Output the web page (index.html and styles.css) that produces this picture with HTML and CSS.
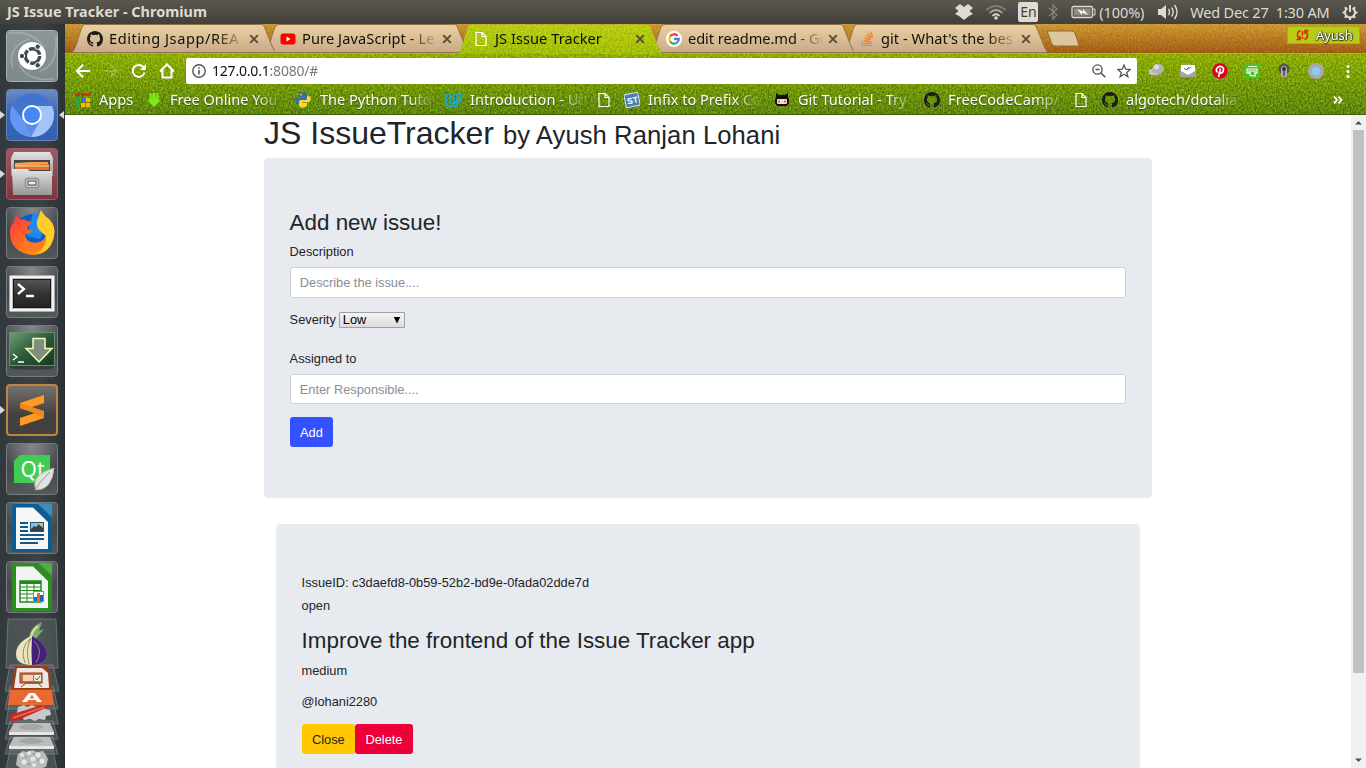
FILE: index.html
```html
<!DOCTYPE html>
<html lang="en">
<head>
<meta charset="utf-8">
<title>JS Issue Tracker</title>
<link rel="stylesheet" href="styles.css">
</head>
<body>
<svg class="defs" width="0" height="0" aria-hidden="true">
  <defs>
    <filter id="grain" x="0" y="0" width="100%" height="100%" color-interpolation-filters="sRGB">
      <feTurbulence type="fractalNoise" baseFrequency="0.6 0.45" numOctaves="2" seed="4"/>
      <feColorMatrix values="1.8 0 0 0 -0.4  1.8 0 0 0 -0.4  1.8 0 0 0 -0.4  0 0 0 0 1"/>
    </filter>
    <linearGradient id="tan" x2="0" y2="1"><stop offset="0" stop-color="#e9d3a0"/><stop offset="1" stop-color="#c9a98a"/></linearGradient>
    <linearGradient id="lime" x2="0" y2="1"><stop offset="0" stop-color="#b9cd12"/><stop offset="1" stop-color="#a3bd08"/></linearGradient>
    <linearGradient id="silver" x2="0" y2="1"><stop offset="0" stop-color="#e4e4e4"/><stop offset="1" stop-color="#979797"/></linearGradient>
    <linearGradient id="fox" x2="1" y2="1"><stop offset="0" stop-color="#ff2a50"/><stop offset=".5" stop-color="#ff6a20"/><stop offset="1" stop-color="#ffb800"/></linearGradient>
    <linearGradient id="term" x2="1" y2="1"><stop offset="0" stop-color="#6f9f78"/><stop offset=".5" stop-color="#2c5a38"/><stop offset="1" stop-color="#133a20"/></linearGradient>
    <linearGradient id="black" x2="0" y2="1"><stop offset="0" stop-color="#555"/><stop offset=".5" stop-color="#333"/><stop offset="1" stop-color="#242424"/></linearGradient>
    <symbol id="github" viewBox="0 0 16 16"><path d="M8 0C3.58 0 0 3.58 0 8c0 3.54 2.29 6.53 5.47 7.59.4.07.55-.17.55-.38v-1.49c-2.01.37-2.53-.49-2.69-.94-.09-.23-.48-.94-.82-1.13-.28-.15-.68-.52-.01-.53.63-.01 1.08.58 1.23.82.72 1.21 1.87.87 2.33.66.07-.52.28-.87.51-1.07-1.78-.2-3.64-.89-3.64-3.95 0-.87.31-1.59.82-2.15-.08-.2-.36-1.02.08-2.12 0 0 .67-.21 2.2.82a7.6 7.6 0 0 1 4 0c1.53-1.04 2.2-.82 2.2-.82.44 1.1.16 1.92.08 2.12.51.56.82 1.27.82 2.15 0 3.07-1.87 3.75-3.65 3.95.29.25.54.73.54 1.48v2.2c0 .21.15.46.55.38A8 8 0 0 0 16 8c0-4.42-3.58-8-8-8z" fill="#1c1c1c"/></symbol>
    <symbol id="file" viewBox="0 0 12 16"><path d="M1 1.5h6l4 4v9H1zM7 1.5v4h4" fill="none" stroke="#fff" stroke-width="1.2"/></symbol>
    <symbol id="x" viewBox="0 0 10 10"><path d="M1.2 1.2l7.6 7.6M8.8 1.2L1.2 8.8" stroke="#5a4c36" stroke-width="1.9"/></symbol>
    <symbol id="tabshape" viewBox="0 0 203 29"><path d="M0 28.5 C5 24 8 5 11 1.5 Q12 .5 14 .5 H189 Q191 .5 192 2 L200 22 Q202 27 204 28.5z" fill="url(#tan)" stroke="#94714d"/></symbol>
  </defs>
</svg>

<header class="panel">
  <span class="panel-title">JS Issue Tracker - Chromium</span>
  <svg class="p-drop" width="20" height="18" viewBox="0 0 20 18"><path d="M6 1l4 3 4-3 5 4-3.500 3 3.500 3-4 2-5 4-5-4-4-2 3.500-3L1 5z" fill="#dfdbd2"/></svg>
  <svg class="p-wifi" width="22" height="16" viewBox="0 0 22 16"><g fill="none" stroke-width="1.7"><path d="M1.500 6Q11-2 20.500 6" stroke="#807d75"/><path d="M4.500 9Q11 3 17.500 9" stroke="#aaa69e"/><path d="M7.500 12Q11 8.500 14.500 12" stroke="#dfdbd2"/></g><circle cx="11" cy="14" r="1.700" fill="#dfdbd2"/></svg>
  <span class="p-lang">En</span>
  <svg class="p-bt" width="10" height="16" viewBox="0 0 10 16"><path d="M1 4l8 7-4 4V1l4 4-8 7" fill="none" stroke="#85827b" stroke-width="1.400"/></svg>
  <svg class="p-bat" width="25" height="14" viewBox="0 0 25 14"><rect x="1" y="1.500" width="20.500" height="11" rx="1.500" fill="#5d5b55" stroke="#dfdbd2" stroke-width="1.300"/><rect x="3" y="3.500" width="16.500" height="7" fill="#8f8c85"/><path d="M22 4h2v6h-2" fill="none" stroke="#dfdbd2"/><path d="M6 4l6 2.500V4l5 6-6-2.500V10z" fill="#fff"/></svg>
  <span class="p-pct">(100%)</span>
  <svg class="p-vol" width="20" height="16" viewBox="0 0 20 16"><path d="M0 5h3l5-4v14l-5-4H0z" fill="#dfdbd2"/><g fill="none" stroke="#dfdbd2" stroke-width="1.400"><path d="M10.500 5Q12.500 8 10.500 11M13.500 3.500Q17 8 13.500 12.500M16.500 1Q21.500 8 16.500 15"/></g></svg>
  <span class="p-clock">Wed Dec 27&nbsp; 1:30 AM</span>
  <svg class="p-gear" width="16" height="17" viewBox="0 0 16 17"><g fill="none" stroke="#dfdbd2"><path d="M5.500 4.200a5 5 0 1 0 5 0" stroke-width="2"/><path d="M8 1v7" stroke-width="2"/><path d="M2.800 3.200l1.500 1.500M13.200 3.200l-1.500 1.500M.5 8.500h2.500M15.500 8.500H13M2.800 13.800l1.500-1.500M13.200 13.800l-1.500-1.500M8 16v-2.500" stroke-width="2"/></g></svg>
</header>

<div class="desktop">
  <aside class="dock">
    <div class="tile tile-dash"><svg viewBox="0 0 52 52"><g fill="none" stroke="#bcc5c7" stroke-opacity=".45" stroke-width="1.600"><path d="M2 3Q28 0 39 19M50 7Q52 36 34 41M49 49Q20 52 13 33M7 38Q0 18 23 9"/></g><circle cx="26" cy="26" r="15" fill="#6d7779" opacity=".4"/><circle cx="26" cy="26" r="14" fill="#fff"/><circle cx="26.500" cy="26" r="7.200" fill="none" stroke="#414b4e" stroke-width="3.400" stroke-dasharray="13.500 1.580"/><g fill="#414b4e" stroke="#fff" stroke-width="1"><circle cx="16" cy="26" r="2.700"/><circle cx="31.700" cy="16.700" r="2.700"/><circle cx="31.700" cy="35.300" r="2.700"/></g></svg></div>
    <div class="tile tile-chromium"><i class="mark-l"></i><i class="mark-r"></i><svg viewBox="0 0 52 52"><circle cx="26" cy="26" r="22" fill="#5c8be8"/><path d="M6 17A22 22 0 0 1 46 17H26L18 31z" fill="#4273cf"/><path d="M26 17h20a22 22 0 0 1-21 31l9-16z" fill="#a3c3fa"/><path d="M6 17L18 32l7 16A22 22 0 0 1 6 17" fill="#6596f3"/><circle cx="26" cy="26" r="10" fill="#fff"/><circle cx="26" cy="26" r="8" fill="#4687f4"/></svg></div>
    <div class="tile tile-files"><i class="mark-l"></i><svg viewBox="0 0 52 52"><path d="M8 4h36l3 6v18H5V10z" fill="url(#silver)"/><path d="M8 12h36v12H8z" fill="#444"/><path d="M9 15l16-1h17v8H9z" fill="#f1a24e"/><path d="M9 18l34-2v6H9z" fill="#e56d2e"/><path d="M9 18h34" stroke="#ffe1a8"/><path d="M6 21h15l3 2h22v24H7z" fill="url(#silver)"/><rect x="19.500" y="30.500" width="13" height="9" rx="2" fill="#d6d6d6" stroke="#8d8d8d" stroke-width="1.500"/><rect x="22" y="33" width="8" height="4" fill="#eee" stroke="#444"/></svg></div>
    <div class="tile"><svg viewBox="0 0 52 52"><circle cx="27" cy="25" r="18" fill="#0b60c8"/><path d="M27 6q10 0 14 8l-7 18-13-3z" fill="#2089ec"/><path d="M10 7l4 6q4-2 7 1l5 1-5 6q1 3 6 2-4 5-8 4 1 9 10 9 12-1 11-12l-4-2q-4-6-2-12l1-7q3 6 8 9 7 7 5 17-3 18-21 19Q6 46 4 28 3 20 8 15z" fill="url(#fox)"/><path d="M35 3q3 6 8 9 7 7 5 17-3 15-17 18 10-8 9-18l-7-6q-4-6-1-12z" fill="#ffcc2a"/><path d="M15 25q3 11 15 11 8-1 10-6-1 14-14 15-10-4-11-20" fill="#ff7720"/></svg></div>
    <div class="tile"><svg viewBox="0 0 52 52"><rect x="3.500" y="9.500" width="45" height="36" rx="1" fill="#f2f2f2" stroke="#aaa"/><rect x="6" y="12" width="40" height="31" fill="#bbb"/><rect x="7.500" y="13.500" width="37" height="28" fill="url(#black)" stroke="#171717"/><path d="M12 18l6 5-6 5M20 30h8" fill="none" stroke="#fff" stroke-width="2.300"/></svg></div>
    <div class="tile"><svg viewBox="0 0 52 52"><ellipse cx="26" cy="42" rx="22" ry="3" fill="#222" opacity=".5"/><rect x="3.500" y="7.500" width="45" height="33" fill="url(#term)" stroke="#6c8a70"/><path d="M27 13.500h12v10h7L33 37 20 23.500h7z" fill="#7d907f" stroke="#f7fabb" stroke-width="1.500"/><path d="M7 29l4 3-4 3M12 37h6" fill="none" stroke="#fff" stroke-width="1.300"/></svg></div>
    <div class="tile tile-sublime"><i class="mark-l"></i><svg viewBox="0 0 52 52"><path d="M14 19L38 11v8L23 24l15 5v5L14 42v-8l15-5-15-5z" fill="#ff9b20"/><path d="M14 24v-5l24 8v7l-10-5z" fill="#f1881b"/></svg></div>
    <div class="tile"><svg viewBox="0 0 52 52"><path d="M14 12h30v28H8V18z" fill="#41cd52"/><text x="14.500" y="33.500" class="qt">Qt</text><path d="M48 25Q46 47 30 47 24 32 48 25z" fill="#e2e2df" stroke="#b5b5b0"/><path d="M29 47Q34 38 44 29" stroke="#999" fill="none"/></svg></div>
    <div class="tile"><svg viewBox="0 0 52 52"><path d="M8 2h24l14 14v34H8q-2 0-2-2V4q0-2 2-2z" fill="#0b5e91"/><path d="M33 2h13v13z" fill="#3790c3"/><path d="M10 5.500h17L42 20v27H10z" fill="#f7f7f7"/><g stroke="#155988" stroke-width="1.800"><path d="M14 21h8M14 25h8M14 29h8M14 33h24M14 37h24M14 41h18"/></g><rect x="24.500" y="20.500" width="13" height="9" fill="#8ac0e4" stroke="#1d577a"/><path d="M25 29v-2l3-3 2 1 3-3 4 4v3z" fill="#32424b"/><circle cx="35" cy="22.500" r="1.500" fill="#e6c229"/></svg></div>
    <div class="tile"><svg viewBox="0 0 52 52"><path d="M8 2h24l14 14v34H8q-2 0-2-2V4q0-2 2-2z" fill="#2c8e1d"/><path d="M33 2h13v13z" fill="#4cb339"/><path d="M10 5.500h17L42 20v27H10z" fill="#f3f3f3"/><rect x="14" y="20" width="21" height="21" fill="#fff" stroke="#1e8a1a" stroke-width="1.500"/><path d="M14 21.500h21" stroke="#1e8a1a" stroke-width="3"/><path d="M14 26h21M14 29.500h21M14 33h21M14 37h21M21 20v21M28 20v21" stroke="#1e8a1a"/><rect x="27.500" y="30.500" width="10" height="10" fill="#fff" stroke="#888"/><path d="M28 36h3v4h-3z" fill="#0078bd"/><path d="M31 32h3v8h-3z" fill="#e66b25"/><path d="M34 34h3v6h-3z" fill="#1d62a6"/></svg></div>
    <svg class="stack" width="54" height="152" viewBox="0 0 54 152">
      <g fill="#7d8588" fill-opacity=".3" stroke="#8e9698" stroke-opacity=".55">
        <path d="M3 1h48l2 49H1z"/><path d="M5 47h43l6 26H0z"/><path d="M5 68h43l5 23H0z"/><path d="M4 86h45l4 20H1z"/><path d="M5 103h43l5 18H0z"/><path d="M5 119h43l5 17H0z"/><path d="M5 132h43l4 20H1z"/>
      </g>
      <path d="M25 23Q22 15 31 7l6-3-3 9 5-2-10 12z" fill="#83a96b"/><path d="M26 22Q26 13 33 8" fill="none" stroke="#d7e1b0" stroke-width="2"/>
      <path d="M26 18Q11 25 11 36q0 11 16 11 15 0 15-12-1-9-16-17" fill="#eae3bf"/><path d="M27 18q-1 15 0 29 15 0 15-12-1-9-15-17" fill="#432078"/><g fill="none" stroke="#998960"><path d="M26 20Q14 30 20 45M26 20Q20 32 24 46M29 23q10 9 2 22"/></g>
      <path d="M10 48h33l4 23H6z" fill="#963e16"/><path d="M12 50h25l6 5 1 15H9z" fill="#ece9e4"/><rect x="15" y="55" width="22" height="10" fill="#c57046" stroke="#923c12"/><rect x="18" y="57" width="10" height="6" fill="#f5d2b8"/><rect x="29" y="57" width="7" height="6" fill="#e4f0dc"/><path d="M30 60l2 2 3-4" fill="none" stroke="#229530"/><path d="M16 69l5-4h12l4 4" fill="none" stroke="#923c12"/>
      <path d="M5 72h42l2 15H3z" fill="#e86a30"/><text x="17" y="84" class="store" textLength="20" lengthAdjust="spacingAndGlyphs">A</text>
      <path d="M13 89l6-2 3 2 5-2 5 2 7-2 1 4 5 1 1 5-5 1-1 4-6-1-4 2-5-2-6 1-2-3-6-1 1-4z" fill="#c7c9c9"/><path d="M5 101q-1-3 3-5L37 87l6 2-32 14q-5 2-6-2" fill="#cb2726"/><path d="M8 100l31-11" stroke="#ef6957" stroke-width="1.500"/>
      <path d="M9 105h36l4 9H4z" fill="#bcbebe"/><path d="M4 114h45v3H4z" fill="#e6e6e6"/><ellipse cx="26" cy="109" rx="12" ry="3" fill="#a4a6a6"/>
      <path d="M9 119h36l4 9H4z" fill="#bcbebe"/><path d="M4 128h45v3H4z" fill="#e6e6e6"/><ellipse cx="26" cy="123" rx="12" ry="3" fill="#a4a6a6"/>
      <path d="M13 136l5-3 4 1 5-2 5 2 6-1 3 4 2 4-2 8-4 1H15l-4-3 1-7z" fill="#b9bdb9"/><g fill="#e6e8e6"><circle cx="17" cy="137" r="2"/><circle cx="24" cy="135" r="2"/><circle cx="33" cy="137" r="2.500"/><circle cx="28" cy="141" r="2.500"/><circle cx="19" cy="144" r="2.500"/><circle cx="37" cy="143" r="2.500"/><circle cx="29" cy="147" r="2"/></g><g fill="#8b918d"><circle cx="21" cy="139" r="1"/><circle cx="29" cy="136" r="1"/><circle cx="33" cy="142" r="1"/><circle cx="24" cy="146" r="1"/></g>
    </svg>
  </aside>

  <main class="browser">
    <div class="tabstrip">
      <svg class="grain"><rect width="100%" height="100%" filter="url(#grain)"/></svg>
      <div class="tabs">
        <div class="tab t1"><svg class="shape"><use href="#tabshape"/></svg><svg class="fav" viewBox="0 0 16 16"><use href="#github"/></svg><span class="tab-text fade">Editing Jsapp/REA</span><svg class="close"><use href="#x"/></svg></div>
        <div class="tab t2"><svg class="shape"><use href="#tabshape"/></svg><svg class="fav" viewBox="0 0 16 16"><rect x=".5" y="2.500" width="15" height="11" rx="2.500" fill="#f00"/><path d="M6.500 5.500v5l4-2.500z" fill="#fff"/></svg><span class="tab-text fade">Pure JavaScript - Le</span><svg class="close"><use href="#x"/></svg></div>
        <div class="tab t3 active"><svg class="shape" viewBox="0 0 203 30"><path id="act" d="M0 30C5 24 8 5 11 1.500Q12 .5 14 .5H189Q191 .5 192 2L200 22Q202 27 204 30z" fill="url(#lime)"/><clipPath id="actclip"><use href="#act"/></clipPath><g clip-path="url(#actclip)" class="soft"><rect width="203" height="30" filter="url(#grain)"/></g></svg><svg class="fav"><use href="#file" x="2" width="12" height="16"/></svg><span class="tab-text">JS Issue Tracker</span><svg class="close"><use href="#x"/></svg></div>
        <div class="tab t4"><svg class="shape"><use href="#tabshape"/></svg><svg class="fav" viewBox="0 0 16 16"><circle cx="8" cy="8" r="8" fill="#fff"/><g fill="none" stroke-width="2.300"><path d="M4 5.500A4.800 4.800 0 0 1 11.500 4.700" stroke="#ea4335"/><path d="M4 5.500a5 5 0 0 0 0 5" stroke="#fbbc05"/><path d="M4 10.500A4.800 4.800 0 0 0 11.200 11.500" stroke="#34a853"/><path d="M8 8h4.800q0 2-1.600 3.500" stroke="#4285f4"/></g></svg><span class="tab-text fade">edit readme.md - Go</span><svg class="close"><use href="#x"/></svg></div>
        <div class="tab t5"><svg class="shape"><use href="#tabshape"/></svg><svg class="fav" viewBox="0 0 16 16"><path d="M3 10v4.500h9V10" fill="none" stroke="#a0a0a0" stroke-width="1.300"/><g stroke="#f48024" stroke-width="1.400"><path d="M4.500 12.500h6M4.700 9.800l6 .9M5.500 7l5.500 2M7 4.300l4.800 3.500M9 2l3.500 4.800M12.200.7l1.200 5.700"/></g></svg><span class="tab-text fade">git - What's the bes</span><svg class="close"><use href="#x"/></svg></div>
      </div>
      <svg class="newtab" width="35" height="18" viewBox="0 0 35 18"><path d="M1 1h25q2 0 3 2l4 12q0 1-1 1H9q-2 0-3-2z" fill="#dcc79c" stroke="#8f6a36"/></svg>
      <div class="profile"><svg width="13" height="12" viewBox="0 0 13 12"><g fill="none" stroke="#d92608" stroke-width="1.500"><path d="M4.500 1.500Q1 3 1.500 6.500L3 10M.5 10.500h3.500V7M8.500 10.500Q12 9 11.500 5.500L10 2M12.500 1.500H9V5"/></g><path d="M6.500 2v4.500M6.500 8v2" stroke="#d92608" stroke-width="1.500"/></svg><span>Ayush</span></div>
    </div>

    <div class="chrome">
      <svg class="grain"><rect width="100%" height="100%" filter="url(#grain)"/></svg>
      <nav class="toolbar">
        <div class="nav-icons">
          <svg viewBox="0 0 16 16"><path d="M15 8H2M8 1.800L1.800 8 8 14.200" fill="none" stroke="#fff" stroke-width="2"/></svg>
          <svg viewBox="0 0 16 16" opacity=".22"><path d="M1 8h13M8 1.800L14.200 8 8 14.200" fill="none" stroke="#fff" stroke-width="2"/></svg>
          <svg viewBox="0 0 16 16"><path d="M13.500 9.500A6 6 0 1 1 12.300 4" fill="none" stroke="#fff" stroke-width="2"/><path d="M15 1v6H9z" fill="#fff"/></svg>
          <svg viewBox="0 0 16 16"><path d="M1 8.500L8 1.500l7 7M3.500 7v7.500h9V7" fill="none" stroke="#fff" stroke-width="2"/></svg>
        </div>
        <div class="omnibox">
          <svg width="14" height="14" viewBox="0 0 14 14"><circle cx="7" cy="7" r="6.200" fill="none" stroke="#555" stroke-width="1.400"/><path d="M7 6v4.500M7 3.300v1.500" stroke="#555" stroke-width="1.600"/></svg>
          <span class="url">127.0.0.1<em>:8080/#</em></span>
          <svg class="lens" width="14" height="14" viewBox="0 0 14 14"><circle cx="5.500" cy="5.500" r="4.600" fill="none" stroke="#555" stroke-width="1.400"/><path d="M3.500 5.500h4M9 9l4.300 4.300" stroke="#555" stroke-width="1.600"/></svg>
          <svg width="14" height="14" viewBox="0 0 14 14"><path d="M7 1l1.700 4.200 4.500.3-3.500 2.900 1.200 4.400L7 10.300l-3.900 2.500 1.200-4.400L.8 5.500l4.500-.3z" fill="none" stroke="#555" stroke-width="1.300"/></svg>
        </div>
        <div class="exts">
          <svg viewBox="0 0 16 16"><circle cx="10" cy="6" r="5.500" fill="#b3b3b3"/><circle cx="8.500" cy="4" r="2.500" fill="#dedede"/><path d="M7 10l3 4 3-5z" fill="#999"/><path d="M7 5Q0 6 .5 9.500T9 12l4-3q-7 2-8 0t2-3z" fill="#c4c4c4"/></svg>
          <svg viewBox="0 0 16 16"><path d="M0 5l8-5 8 5v9H0z" fill="#a4a4a4"/><path d="M1 2h14v6l-7 4-7-4z" fill="#fff"/><path d="M4 5l2 2 3-3M7 7l4-3" stroke="#777" fill="none"/></svg>
          <svg viewBox="0 0 16 16"><circle cx="8" cy="8" r="7.700" fill="#df0020"/><path d="M5.500 9.500Q3 7 5.500 4.500q4-2.500 6 1 0 5-3.500 4.500L6.500 9.500M8.500 5.500L6.500 14" fill="none" stroke="#fff" stroke-width="1.700"/></svg>
          <svg viewBox="0 0 16 16"><rect x=".5" y=".5" width="15" height="15" fill="#4fc11d"/><path d="M4 3.500h9M3 6h10v4h-2V8H5v2H3zM6 9v3l3 1h2V9" fill="none" stroke="#fff" stroke-width="1.200"/></svg>
          <svg viewBox="0 0 16 16"><circle cx="8" cy="6" r="5.500" fill="#555"/><path d="M5 6a3 3 0 0 1 6 0v8H5z" fill="#aaa"/><circle cx="8" cy="6" r="1.900" fill="#333"/><path d="M7 8h2v5H7z" fill="#666"/></svg>
          <svg viewBox="0 0 16 16"><circle cx="8" cy="8" r="8" fill="#a9aaa9"/><circle cx="8" cy="8" r="4.200" fill="#91c9f5"/></svg>
          <svg viewBox="0 0 16 16"><g fill="#fff"><circle cx="8" cy="3.500" r="1.500"/><circle cx="8" cy="8.500" r="1.500"/><circle cx="8" cy="13.500" r="1.500"/></g></svg>
        </div>
      </nav>
      <nav class="bookmarks">
        <div class="bm b-apps"><svg width="14" height="14" viewBox="0 0 14 14"><path d="M0 0h4v3H0zM5 0h4v3H5zM10 0h4v3h-4z" fill="#e52717"/><path d="M0 5h4v4H0zM0 10h4v4H0z" fill="#20a35b"/><path d="M5 5h4v4H5z" fill="#3c70e8"/><path d="M10 5h4v4h-4zM5 10h4v4H5zM10 10h4v4h-4z" fill="#fcb900"/></svg><span>Apps</span></div>
        <div class="bm b-free"><svg width="14" height="16" viewBox="0 0 14 16"><path d="M2.500 1h9v7H14l-7 7-7-7h2.500z" fill="#7fe914"/><path d="M5 1v5M9 1v5" stroke="#59bd09"/></svg><span class="fade">Free Online You</span></div>
        <div class="bm b-py"><svg width="16" height="16" viewBox="0 0 16 16"><path d="M8 .5c-3 0-4 1-4 2.500V5h4.500v.7H2.500C1 5.700.3 7 .3 9s1 3 2.200 3H4V9.500Q4 8 5.500 8H10q2 0 2-2V3Q12 .5 8 .5z" fill="#356f9f"/><path d="M8 15.500c3 0 4-1 4-2.500v-2H7.500v-.7h6c1.500 0 2.200-1.300 2.200-3.300s-1-3-2.200-3H12V6.500Q12 8 10.500 8H6q-2 0-2 2v3q0 2.500 4 2.500z" fill="#ffd43b"/><circle cx="6" cy="2.800" r=".8" fill="#fff"/></svg><span class="fade">The Python Tuto</span></div>
        <div class="bm b-ud"><svg width="17" height="16" viewBox="0 0 17 16"><path d="M5 1.500Q1 2 1 5v4q0 5.500 6 5.500 5 0 6-4M5 1.500V8q0 3.500 3.500 3.500T12 8V2.500M8.500 2.500V8q0 3 3.500 3 3.500-.5 3.500-4V1.500L12 2.500" fill="none" stroke="#12aae0" stroke-width="1.700"/></svg><span class="fade">Introduction - Ud</span></div>
        <svg class="bm-file" width="12" height="16"><use href="#file"/></svg>
        <div class="bm b-in"><svg width="16" height="16" viewBox="0 0 16 16"><g transform="rotate(-12 8 8)"><rect x="1" y="1.500" width="14" height="13" fill="#4b7eb8" stroke="#dbe3ec"/><text x="3" y="11.500" class="st">ST</text></g></svg><span class="fade">Infix to Prefix Co</span></div>
        <div class="bm b-git"><svg width="14" height="13" viewBox="0 0 14 13"><path d="M1 0l3 2h6l3-2v5l1 1v4l-2 3H2L0 10V6l1-1z" fill="#111"/><rect x="2" y="6" width="10" height="5" rx="1" fill="#ffd7cb"/><path d="M4 7.500v2M10 7.500v2" stroke="#9c4f46" stroke-width="1.400"/></svg><span class="fade">Git Tutorial - Try</span></div>
        <div class="bm b-fcc"><svg width="16" height="16"><use href="#github"/></svg><span class="fade">FreeCodeCamp/</span></div>
        <svg class="bm-file second" width="12" height="16"><use href="#file"/></svg>
        <div class="bm b-algo"><svg width="16" height="16"><use href="#github"/></svg><span class="fade">algotech/dotalia</span></div>
        <svg class="more" width="10" height="8" viewBox="0 0 10 8"><path d="M1 .7L4 4 1 7.300M5.500.7l3 3.300-3 3.300" fill="none" stroke="#fff" stroke-width="1.800"/></svg>
      </nav>
    </div>

    <div class="viewport">
      <div class="page">
        <h1 class="page-title">JS IssueTracker <small>by Ayush Ranjan Lohani</small></h1>
        <section class="card form-card">
          <h3 class="card-title">Add new issue!</h3>
          <div class="group"><label for="desc">Description</label><input id="desc" class="field" placeholder="Describe the issue...."></div>
          <div class="severity"><label>Severity</label><div class="select"><span>Low</span><svg width="8" height="8" viewBox="0 0 8 8"><path d="M.8 1h6.400L4 7.500z"/></svg></div></div>
          <div class="group"><label for="who">Assigned to</label><input id="who" class="field" placeholder="Enter Responsible...."></div>
          <button class="btn primary">Add</button>
        </section>
        <section class="card issue-card">
          <p class="issue-id">IssueID: c3daefd8-0b59-52b2-bd9e-0fada02dde7d</p>
          <p class="status">open</p>
          <h3 class="issue-title">Improve the frontend of the Issue Tracker app</h3>
          <p class="level">medium</p>
          <p class="owner">@lohani2280</p>
          <div class="actions"><button class="btn warning">Close</button><button class="btn danger">Delete</button></div>
        </section>
      </div>
      <div class="scrollbar"><svg width="15" height="15" viewBox="0 0 15 15"><path d="M4 9.500L7.500 6 11 9.500z" fill="#505050"/></svg><div class="thumb"></div><svg width="15" height="15" viewBox="0 0 15 15"><path d="M4 5.500L7.500 9 11 5.500z" fill="#505050"/></svg></div>
    </div>
  </main>
</div>
</body>
</html>
```
FILE: styles.css
```css
* { box-sizing: border-box; }
body { margin: 0; width: 1366px; height: 768px; overflow: hidden; font: 12.8px/1.5 "Liberation Sans", Arial, sans-serif; color: #212529; }
.defs { position: absolute; }
svg { flex: none; }

/* Desktop panel */
.panel { height: 24px; display: flex; align-items: center; padding: 0 8px 0 7px; background: linear-gradient(#5a584f, #403f3a); color: #dfdbd2; font: 14.5px/24px "Noto Sans", "Open Sans", sans-serif; white-space: nowrap; }
.panel-title { font-weight: 700; font-size: 14.400px; width: 949px; letter-spacing: .02px; }
.p-wifi { margin-left: 11px; }
.p-lang { width: 20px; height: 20px; margin-left: 11px; border-radius: 2px; background: #dfdbd2; color: #403f3a; font-size: 14px; line-height: 20px; text-align: center; }
.p-bt { margin-left: 10px; }
.p-bat { margin-left: 13px; }
.p-pct { margin-left: 3px; width: 47px; font-size: 14.500px; letter-spacing: -.1px; }
.p-vol { margin-left: 12px; }
.p-clock { margin-left: 12px; width: 140px; font-size: 14.500px; letter-spacing: -.18px; }
.p-gear { margin-left: 12px; }

.desktop { display: flex; height: 744px; }

/* Launcher */
.dock { width: 65px; flex: none; padding: 6px 6px 0; display: flex; flex-direction: column; gap: 7px; overflow: hidden; background: linear-gradient(90deg, #32393c, #3a4245 60%, #2b3235); }
.tile { position: relative; width: 52px; height: 52px; flex: none; border-radius: 4px; border: 1px solid #767b7d; background: radial-gradient(ellipse at 50% 0, #85898b, transparent 70%), linear-gradient(#55595b, #45494c 50%, #53585a); }
.tile svg { display: block; margin: -1px; width: 52px; height: 52px; }
.tile-dash { background: linear-gradient(#8d9799, #7e898b); border-color: #a8b0b2; }
.tile-chromium { background: linear-gradient(#6c8bc2, #3866b5 45%, #3461b2); border-color: #6484ba; }
.tile-files { background: linear-gradient(#985c67, #80333e); border-color: #a75a66; }
.tile-sublime { border: 2px solid #bf843f; background: linear-gradient(#75716d, #434140 60%); }
.tile-sublime svg { margin: -2px; }
.mark-l, .mark-r { position: absolute; top: 21px; border: solid transparent; border-width: 4px 0 4px 5px; border-left-color: #d9d9d9; left: -7px; }
.mark-r { left: auto; right: -7px; border-width: 4px 5px 4px 0; border-right-color: #d9d9d9; }
.tile-sublime .mark-l { left: -8px; top: 20px; }
.stack { margin: -2px 0 0 -1px; width: 54px; height: 152px; }
.qt { font: 21px "Noto Sans", sans-serif; fill: #fff; }
.store { font: bold 13px "Noto Sans", sans-serif; fill: #fff; }
.st { font: bold 8.500px "Liberation Sans", sans-serif; fill: #fff; }

/* Browser frame */
.browser { flex: 1; min-width: 0; display: flex; flex-direction: column; font-family: "Noto Sans", "Open Sans", sans-serif; }
.grain { position: absolute; left: 0; top: 0; width: 100%; height: 100%; mix-blend-mode: overlay; opacity: .32; }
.soft { mix-blend-mode: overlay; opacity: .3; }
.tabstrip { position: relative; z-index: 1; height: 29px; display: flex; padding-left: 7px; background: linear-gradient(#cc9834, #a15d12); }
.tabstrip .grain { opacity: .14; }
.tabs { display: flex; position: relative; }
.tab { position: relative; width: 203px; height: 29px; margin-right: -10px; display: flex; align-items: center; padding: 0 16px 0 15px; }
.t1 { z-index: 4; } .t2 { z-index: 3; } .t4 { z-index: 2; } .t5 { z-index: 1; }
.tab.active { z-index: 5; }
.shape { position: absolute; left: 0; top: 0; width: 203px; height: 29px; overflow: visible; isolation: isolate; }
.active .shape { height: 30px; }
.fav { position: relative; width: 16px; height: 16px; }
.tab-text { position: relative; margin-left: 6px; width: 136px; height: 29px; white-space: nowrap; color: #131007; font-size: 14.600px; line-height: 29px; letter-spacing: .05px; }
.t1 .tab-text { letter-spacing: .55px; }
.t2 .tab-text { letter-spacing: .1px; }
.t3 .tab-text { margin-left: 6px; width: 136px; }
.t4 .tab-text { letter-spacing: -.05px; }
.t5 .tab-text { letter-spacing: .05px; }
.fade { -webkit-mask-image: linear-gradient(90deg, #000 calc(100% - 30px), transparent); mask-image: linear-gradient(90deg, #000 calc(100% - 30px), transparent); }
.close { position: relative; margin-left: auto; width: 10px; height: 10px; }
.newtab { position: relative; margin: 6px 0 0 9px; }
.profile { position: relative; margin: 2px 6px 0 auto; width: 73px; height: 18px; display: flex; align-items: center; gap: 7px; padding-left: 8px; border: 1px solid #9fb313; background: #b9cb16; color: #fff; font-size: 12.800px; line-height: 15px; text-shadow: 0 0 2px #333, 0 1px 1px #333, 1px 0 1px #333; }

.chrome { position: relative; height: 62px; flex: none; background: linear-gradient(#8fae04, #7ca008 35%, #5d850d); border-bottom: 1px solid #41610a; border-top: 1px solid #a4bd10; isolation: isolate; }
.toolbar { position: relative; height: 30px; display: flex; align-items: center; padding: 4px 10px 0 10px; }
.nav-icons { display: flex; gap: 12px; width: 111px; }
.nav-icons svg { width: 16px; height: 16px; }
.omnibox { width: 951px; height: 26px; display: flex; align-items: center; padding: 0 6px; border-radius: 2px; background: #fff; }
.url { margin-left: 6px; color: #111; font-size: 14px; line-height: 26px; letter-spacing: -.2px; }
.url em { font-style: normal; color: #7a7a7a; }
.lens { margin: 0 11px 0 auto; }
.exts { display: flex; gap: 16px; margin-left: 11px; }
.exts svg { width: 16px; height: 16px; }
.bookmarks { position: relative; height: 29px; display: flex; align-items: center; padding: 2px 23px 0 11px; color: #fff; font-size: 14.500px; line-height: 27px; }
.bm { display: flex; align-items: center; white-space: nowrap; flex: none; }
.bm span { letter-spacing: .02px; text-shadow: 0 1px 1px #35500a; }
.bm .fade { -webkit-mask-image: linear-gradient(90deg, #000 calc(100% - 28px), transparent); mask-image: linear-gradient(90deg, #000 calc(100% - 28px), transparent); }
.b-apps { width: 71px; gap: 9px; }
.b-free { width: 148px; gap: 9px; }
.b-free span { width: 113px; }
.b-py { width: 150px; gap: 9px; }
.b-py span { width: 115px; }
.b-ud { width: 152px; gap: 8px; }
.b-ud span { width: 117px; }
.bm-file { margin-right: 14px; margin-left: 1px; }
.b-in { width: 151px; gap: 8px; }
.b-in span { width: 114px; }
.b-git { width: 149px; gap: 9px; }
.b-git span { width: 117px; }
.b-fcc { width: 150px; gap: 8px; }
.b-fcc span { width: 116px; letter-spacing: .1px; }
.bm-file.second { margin-right: 15px; }
.b-algo { gap: 8px; }
.b-algo span { width: 116px; }
.more { margin-left: auto; }

/* Issue tracker page */
.viewport { flex: 1; min-height: 0; display: flex; background: #fff; overflow: hidden; font-family: "Liberation Sans", Arial, sans-serif; }
.page { width: 888px; margin: 0 auto; flex: none; }
.page-title { margin: 0; height: 43px; font-size: 32px; line-height: 36px; font-weight: 400; }
.page-title small { font-size: 25.600px; font-weight: 400; letter-spacing: .08px; }
.card { padding: 53px 25.600px 49px; border-radius: 4px; background: #e7eaef; }
.form-card { height: 340px; margin-bottom: 26px; }
.card-title, .issue-title { margin: 0 0 6.400px; font-size: 22.400px; line-height: 24.600px; font-weight: 400; }
.group label { display: block; margin-bottom: 6px; }
.field { display: block; width: 100%; height: 30.400px; margin: 0 0 12.600px; padding: 4.800px 9.200px; border: 1px solid #cbd1da; border-radius: 3.200px; background: #fff; color: #495057; font: 12.8px/19.2px "Liberation Sans", Arial, sans-serif; }
.field::placeholder { color: #868e96; opacity: 1; }
.severity { display: flex; align-items: center; gap: 3px; height: 19px; margin-bottom: 19.500px; }
.select { display: flex; align-items: center; justify-content: space-between; width: 66px; height: 16px; margin-top: 1px; padding: 0 3px; border: 1px solid #a0a0a0; border-radius: 1px; background: linear-gradient(#f5f5f5, #dcdcdc); color: #000; line-height: 14px; }
.btn { height: 30px; padding: 1px 10.400px 0; border: 0; border-radius: 3.200px; font: 12.800px/29px "Liberation Sans", Arial, sans-serif; color: #fff; }
.primary { background: #3351ff; }
.warning { background: #ffc800; color: #212529; }
.danger { background: #ed0039; }
.issue-card { height: 300px; margin: 0 12px; padding-top: 49px; }
.issue-card p { margin: 0; line-height: 19px; }
.issue-card .status { margin: 4px 0 14px; }
.issue-card .owner { margin: 12px 0 13px; }
.issue-title { margin-bottom: 7.400px; }
.actions { display: flex; }
.scrollbar { width: 15px; flex: none; display: flex; flex-direction: column; justify-content: space-between; align-items: center; background: #f1f1f1; }
.thumb { width: 11px; height: 543px; margin-bottom: auto; background: #c1c1c1; }
```
